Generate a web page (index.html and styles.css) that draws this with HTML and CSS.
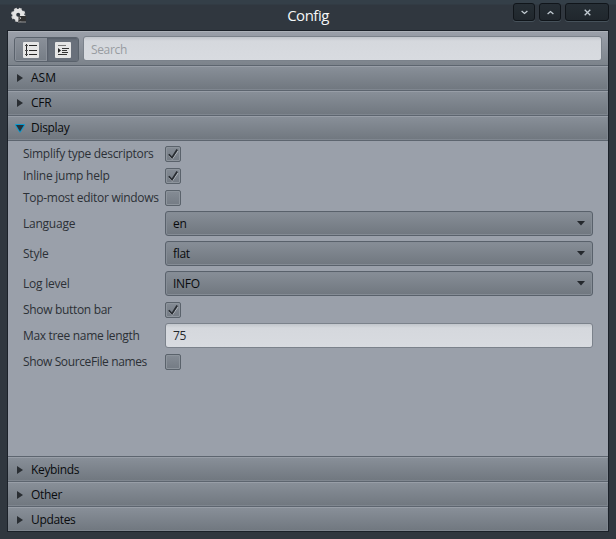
FILE: index.html
```html
<!DOCTYPE html>
<html lang="en">
<head>
<meta charset="utf-8">
<title>Config</title>
<link rel="stylesheet" href="styles.css">
</head>
<body>
<div class="window">
  <header class="titlebar">
    <svg class="app-icon" width="16" height="17" viewBox="0 0 16 17">
      <circle cx="7.2" cy="7.8" r="6.2" fill="none" stroke="#d4d4d4" stroke-width="2" stroke-dasharray="2.8 2.07"/>
      <circle cx="7.2" cy="7.8" r="4" fill="none" stroke="#e4e4e4" stroke-width="4"/>
      <rect x="7.5" y="9" width="7.5" height="5.5" fill="#303030"/>
      <path d="M8.5 10.2l1.5 1-1.5 1" stroke="#b5b5b5" fill="none"/>
      <path d="M7 15h8" stroke="#929292"/>
    </svg>
    <h1 class="title">Config</h1>
    <div class="controls">
      <button class="control"><svg width="7" height="5" viewBox="0 0 7 5"><path d="M.6 1L3.5 3.4 6.4 1"/></svg></button>
      <button class="control"><svg width="7" height="5" viewBox="0 0 7 5"><path d="M.6 4L3.5 1.6 6.4 4"/></svg></button>
      <button class="control close"><svg width="7" height="7" viewBox="0 0 7 7"><path d="M.7 .7l5.6 5.6M6.3 .7L.7 6.3"/></svg></button>
    </div>
  </header>
  <main class="panel">
    <div class="toolbar">
      <div class="segmented">
        <button class="segment"><svg width="16" height="16" viewBox="0 0 16 16"><rect width="16" height="16" fill="#e6e6e6"/><path d="M3.5 2v12M6 3.5h8M6 8.5h8M6 12.5h8" stroke="#252525"/><path d="M2 3.5h3M2 8.5h3M2 12.5h3" stroke="#4b4b4b"/></svg></button>
        <button class="segment selected"><svg width="16" height="16" viewBox="0 0 16 16"><rect width="16" height="16" fill="#e6e6e6"/><path d="M3 3.5h8" stroke="#777"/><path d="M7 6.5h7M7 8.5h5M7 10.5h6M3 12.5h9" stroke="#333"/><path d="M3 6v5l3-2.5z" fill="#222"/></svg></button>
      </div>
      <input class="field search" type="text" placeholder="Search">
    </div>
    <div class="section"><i class="arrow"></i><span>ASM</span></div>
    <div class="section"><i class="arrow"></i><span class="cfr">CFR</span></div>
    <div class="section"><svg class="arrow-open" width="14" height="12" viewBox="0 0 14 12"><path class="glow" d="M3 3h8L7 9.5z"/><path d="M3 3h8L7 9.5z" fill="#25323b"/></svg><span class="display">Display</span></div>
    <div class="content">
      <label class="simplify">Simplify type descriptors</label><i class="check"><svg width="12" height="12" viewBox="0 0 12 12"><path class="tick-light" d="M2 7.8l3.2 3.5L11 3"/><path class="tick" d="M1.8 6.2L5 9.7 10.2 1.5"/></svg></i>
      <label class="inline">Inline jump help</label><i class="check"><svg width="12" height="12" viewBox="0 0 12 12"><path class="tick-light" d="M2 7.8l3.2 3.5L11 3"/><path class="tick" d="M1.8 6.2L5 9.7 10.2 1.5"/></svg></i>
      <label class="topmost">Top-most editor windows</label><i class="check"></i>
      <label class="language">Language</label><div class="combo"><span>en</span><i class="caret"></i></div>
      <label class="style">Style</label><div class="combo"><span>flat</span><i class="caret"></i></div>
      <label class="log">Log level</label><div class="combo"><span>INFO</span><i class="caret"></i></div>
      <label class="show-bar">Show button bar</label><i class="check"><svg width="12" height="12" viewBox="0 0 12 12"><path class="tick-light" d="M2 7.8l3.2 3.5L11 3"/><path class="tick" d="M1.8 6.2L5 9.7 10.2 1.5"/></svg></i>
      <label class="max">Max tree name length</label><input class="field number" type="text" value="75">
      <label class="source">Show SourceFile names</label><i class="check"></i>
    </div>
    <div class="section lower"><i class="arrow"></i><span class="keybinds">Keybinds</span></div>
    <div class="section lower"><i class="arrow"></i><span class="other">Other</span></div>
    <div class="section lower"><i class="arrow"></i><span class="updates">Updates</span></div>
  </main>
</div>
</body>
</html>
```

FILE: styles.css
```css
* { box-sizing: border-box; }
body { margin: 0; background: #30373f; font: 12px/16px "Open Sans", sans-serif; color: #2c3036; }
button { padding: 0; margin: 0; border: 0; background: none; }
.window {
  width: 616px; height: 539px; padding: 0 7px 7px;
  display: flex; flex-direction: column;
  background: linear-gradient(#343f48 0, #343f48 4px, #30373f 5px);
}
.titlebar { height: 30px; display: grid; grid-template-columns: 104px 1fr 104px; }
.app-icon { margin: 7px 0 0 4px; }
.title { margin: 5px 0 0; font-weight: 400; font-size: 15px; line-height: 20px; letter-spacing: -0.5px; color: #f4f6f8; text-align: center; }
.controls { display: flex; gap: 4px; padding-top: 3px; justify-content: flex-end; }
.control {
  width: 22px; height: 18px; flex: none; display: flex; align-items: center; justify-content: center;
  background: linear-gradient(#262e35, #20272d); border: 1px solid #10151a; border-radius: 3px;
  box-shadow: 0 1px 0 #46515a;
}
.close { width: 44px; }
.control path { fill: none; stroke: #c3ccd3; stroke-width: 1.3; }
.panel { flex: 1; border: 1px solid #1b2129; display: flex; flex-direction: column; background: #9aa0aa; min-height: 0; }
.toolbar {
  height: 34px; flex: none; display: flex; gap: 4px; padding: 5px 6px;
  background: linear-gradient(#9ba0aa, #7c838b); box-shadow: inset 0 1px 0 #acb1b8;
}
.segmented { display: flex; height: 25px; width: 65px; margin-top: 1px; border: 1px solid #5a626c; border-radius: 3px; overflow: hidden; background: linear-gradient(#8a9099, #767d86); }
.segment { flex: 1; display: flex; align-items: center; justify-content: center; box-shadow: inset 0 0 0 1px #8b919a; }
.segment svg { border-radius: 1px; position: relative; }
.selected { background: #69707b; box-shadow: inset 1px 1px 2px #565d68; }
.selected svg { left: 1px; }
.field {
  border: 1px solid #7b828b; border-radius: 3px; background: linear-gradient(#c2c6cc, #d5d8dd 4px, #d8dbe0);
  outline: 0; padding: 0 7px; font: 12px/16px "Open Sans", sans-serif; color: #24282e;
}
.search { flex: 1; min-width: 0; height: 25px; letter-spacing: -0.35px; padding-top: 1px; }
.search::placeholder { color: #989ca1; opacity: 1; }
.section {
  height: 25px; flex: none; display: flex; align-items: center; padding: 0 0 0 9px;
  border-top: 1px solid #5d656f; background: linear-gradient(#899099, #70777f); color: #090b0d;
  box-shadow: inset 0 1px 0 #989ea7, inset -1px -1px 0 #7f868f;
}
.section span { margin-left: 8px; }
.lower { padding-top: 2px; }
.arrow { width: 6px; height: 8px; background: #292d32; clip-path: polygon(0 0, 100% 50%, 0 100%); }
.arrow-open { margin-left: -4px; }
.section .arrow-open + span { margin-left: 4px; }
.glow { fill: #0c9bd0; stroke: #0c9bd0; stroke-width: 2; stroke-linejoin: round; filter: blur(0.7px); }
.cfr { letter-spacing: -0.2px; }
.display { letter-spacing: -0.3px; }
.keybinds, .updates { letter-spacing: -0.35px; }
.other { letter-spacing: -0.3px; }
.content {
  flex: 1; min-height: 0; border-top: 1px solid #5d656f; padding: 5px 15px 0;
  display: grid; grid-template-columns: 142px 1fr; row-gap: 6px; align-content: start;
  grid-template-rows: 16px 16px 16px 24px 24px 24px 16px 24px 16px;
}
.content label { display: flex; align-items: center; white-space: nowrap; }
.simplify, .topmost { letter-spacing: -0.29px; }
.inline, .language, .style, .log { letter-spacing: -0.24px; }
.show-bar, .max { letter-spacing: -0.32px; }
.source { letter-spacing: -0.38px; }
.check {
  width: 16px; height: 16px; display: flex; align-items: center; justify-content: center;
  background: linear-gradient(#858c95, #747b84); border: 1px solid #5a626b; border-radius: 2px;
  box-shadow: inset 0 0 0 1px #8d949c;
}
.tick { fill: none; stroke: #292d32; stroke-width: 1.7; }
.tick-light { fill: none; stroke: #b4b9bf; stroke-width: 1; }
.combo {
  height: 25px; margin-top: -1px; display: flex; align-items: center; justify-content: space-between; padding: 0 7px;
  background: linear-gradient(#878e97, #70777f); border: 1px solid #59616b; border-radius: 3px;
  box-shadow: inset 0 0 0 1px #858c95; color: #090b0d; letter-spacing: -0.3px;
}
.caret { width: 8px; height: 5px; background: #24282d; clip-path: polygon(0 0, 100% 0, 50% 90%); }
.number { height: 25px; margin-top: -1px; letter-spacing: -0.3px; }
```
